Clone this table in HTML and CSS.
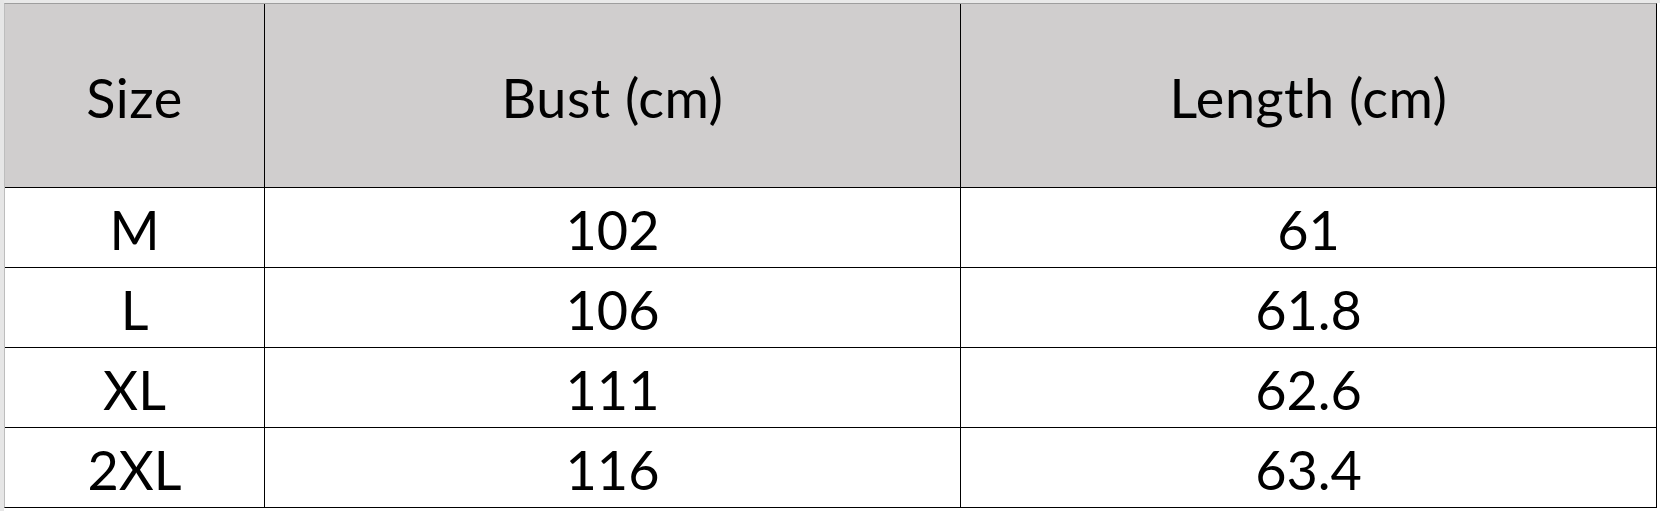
FILE: index.html
```html
<!DOCTYPE html>
<html lang="en">
<head>
<meta charset="utf-8">
<title>Size chart</title>
<link rel="stylesheet" href="styles.css">
</head>
<body>
<div class="page">
  <div class="sheet">
    <div class="cell head">Size</div>
    <div class="cell head">Bust (cm)</div>
    <div class="cell head">Length (cm)</div>
    <div class="cell">M</div>
    <div class="cell">102</div>
    <div class="cell">61</div>
    <div class="cell">L</div>
    <div class="cell">106</div>
    <div class="cell">61.8</div>
    <div class="cell">XL</div>
    <div class="cell">111</div>
    <div class="cell">62.6</div>
    <div class="cell">2XL</div>
    <div class="cell">116</div>
    <div class="cell">63.4</div>
  </div>
</div>
</body>
</html>
```
FILE: styles.css
```css
html, body {
  margin: 0;
  padding: 0;
  background: #ffffff;
}
.page {
  width: 1660px;
  height: 511px;
  padding-top: 3px;
  box-sizing: border-box;
  border-left: 4px solid #e6e6e6;
  background: linear-gradient(#e9e9e9, #e9e9e9) top left / 100% 3px no-repeat, #ffffff;
}
.sheet {
  display: grid;
  grid-template-columns: 259px 695px 695px;
  grid-template-rows: 183px repeat(4, 79px);
  gap: 1px;
  width: max-content;
  background: #000;
  border-left: 1px solid #bdbdbd;
  border-top: 1px solid #9e9e9e;
  border-right: 1px solid #000;
  border-bottom: 1px solid #000;
  font-family: Lato, "Liberation Sans", sans-serif;
  font-size: 54px;
  color: #000;
}
.cell {
  background: #fff;
  display: flex;
  align-items: center;
  justify-content: center;
  padding-top: 4px;
  box-sizing: border-box;
}
.head {
  background: #d0cece;
  letter-spacing: 0.5px;
}
```
